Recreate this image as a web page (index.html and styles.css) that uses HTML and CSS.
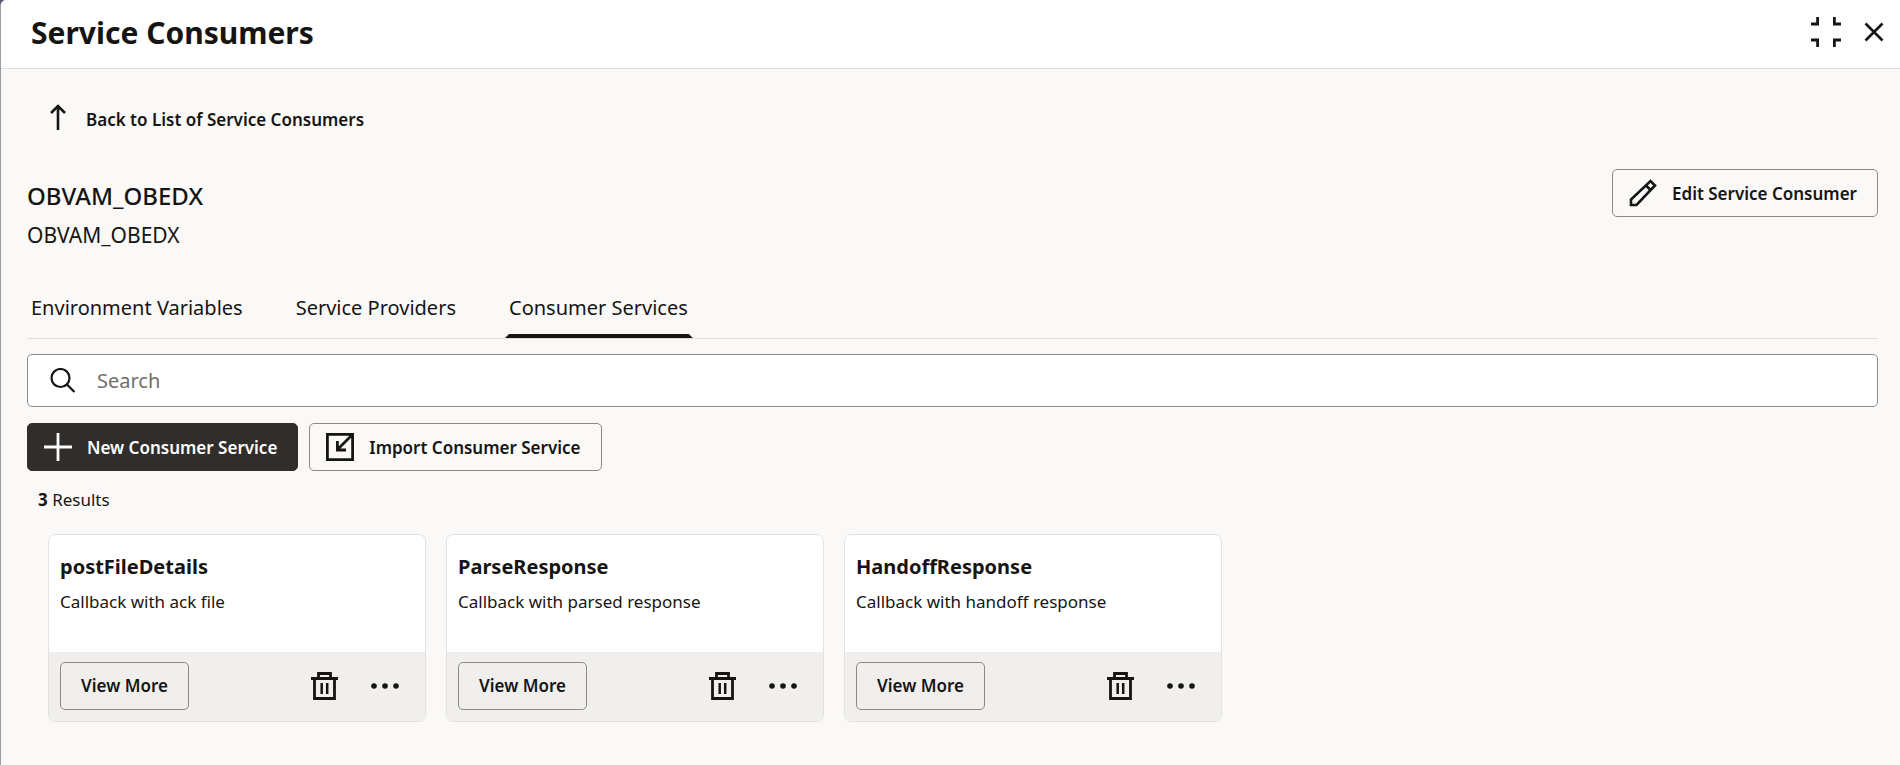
FILE: index.html
```html
<!DOCTYPE html>
<html lang="en">

<head>
    <meta charset="UTF-8">
    <meta name="viewport" content="width=device-width, initial-scale=1.0">
    <title>Service Consumers</title>

    <link rel="stylesheet" href="styles.css">
</head>

<body>
    <!-- shared icons -->
    <svg class="sprite" aria-hidden="true">
        <symbol id="icon-trash" viewBox="0 0 28 28">
            <path d="M0 6.500h27M7.500 6.500v-5h12v5M3.500 6.500v20h20v-20" fill="none" stroke="currentColor" stroke-width="2.8" />
            <path d="M10.700 11v11M16.200 11v11" fill="none" stroke="currentColor" stroke-width="2.5" />
        </symbol>
        <symbol id="icon-more" viewBox="0 0 28 28">
            <circle cx="3" cy="14" r="2.8" fill="currentColor" />
            <circle cx="14" cy="14" r="2.8" fill="currentColor" />
            <circle cx="25" cy="14" r="2.8" fill="currentColor" />
        </symbol>
    </svg>

    <div class="wrap">
        <header class="header">
            <h1 class="header-title">Service Consumers</h1>
            <div class="header-control">
                <button type="button" class="icon-btn" aria-label="Collapse">
                    <svg width="30" height="30" viewBox="0 0 30 30" fill="none" stroke="currentColor" stroke-width="2.8">
                        <path d="M0 7h6.600V0M30 7h-6.600V0M0 23h6.600V30M30 23h-6.600V30" />
                    </svg>
                </button>
                <button type="button" class="icon-btn" aria-label="Close">
                    <svg width="20" height="20" viewBox="0 0 20 20" fill="none" stroke="currentColor" stroke-width="2.6">
                        <path d="M1.500 1.500l17 17M18.500 1.500l-17 17" />
                    </svg>
                </button>
            </div>
        </header>

        <main class="main">
            <a href="#" class="back">
                <svg width="16" height="26" viewBox="0 0 16 26" fill="none" stroke="currentColor" stroke-width="2.6">
                    <path d="M8 26V2M1 9l7-7 7 7" />
                </svg>
                <span>Back to List of Service Consumers</span>
            </a>

            <div class="info">
                <div>
                    <h2 class="info-name">OBVAM_OBEDX</h2>
                    <p class="info-desc">OBVAM_OBEDX</p>
                </div>
                <button type="button" class="btn">
                    <svg width="28" height="28" viewBox="0 0 28 28" fill="none" stroke="currentColor" stroke-width="2.6">
                        <path d="M2 26v-5.500L21.500 2l4.500 4.500L7.500 26zM17 6.500l4.500 4.500" />
                    </svg>
                    <span>Edit Service Consumer</span>
                </button>
            </div>

            <nav class="tabs">
                <a href="#" class="tab">Environment Variables</a>
                <a href="#" class="tab">Service Providers</a>
                <a href="#" class="tab active" aria-current="page">Consumer Services</a>
            </nav>

            <label class="search">
                <svg width="26" height="26" viewBox="0 0 26 26" fill="none" stroke="currentColor" stroke-width="2.2">
                    <circle cx="10.500" cy="10" r="9" />
                    <path d="M17 16.500l7.500 7.500" />
                </svg>
                <input type="text" class="search-input" placeholder="Search" aria-label="Search">
            </label>

            <div class="actions">
                <button type="button" class="btn btn-dark">
                    <svg width="28" height="28" viewBox="0 0 28 28" fill="none" stroke="currentColor" stroke-width="2.8">
                        <path d="M14 0v28M0 14h28" />
                    </svg>
                    <span>New Consumer Service</span>
                </button>
                <button type="button" class="btn">
                    <svg width="28" height="28" viewBox="0 0 28 28" fill="none" stroke="currentColor" stroke-width="2.8">
                        <path d="M1.400 1.400h25.200v25.200H1.400zM26 2L12 16M11.400 8v9H20" />
                    </svg>
                    <span>Import Consumer Service</span>
                </button>
            </div>

            <p class="results"><b>3</b> Results</p>

            <div class="cards">
                <article class="card">
                    <div class="card-body">
                        <h3 class="card-title">postFileDetails</h3>
                        <p class="card-desc">Callback with ack file</p>
                    </div>
                    <div class="card-footer">
                        <button type="button" class="btn">View More</button>
                        <div class="card-control">
                            <button type="button" class="icon-btn" aria-label="Delete"><svg width="28" height="28"><use href="#icon-trash" /></svg></button>
                            <button type="button" class="icon-btn" aria-label="More actions"><svg width="28" height="28"><use href="#icon-more" /></svg></button>
                        </div>
                    </div>
                </article>
                <article class="card">
                    <div class="card-body">
                        <h3 class="card-title">ParseResponse</h3>
                        <p class="card-desc">Callback with parsed response</p>
                    </div>
                    <div class="card-footer">
                        <button type="button" class="btn">View More</button>
                        <div class="card-control">
                            <button type="button" class="icon-btn" aria-label="Delete"><svg width="28" height="28"><use href="#icon-trash" /></svg></button>
                            <button type="button" class="icon-btn" aria-label="More actions"><svg width="28" height="28"><use href="#icon-more" /></svg></button>
                        </div>
                    </div>
                </article>
                <article class="card">
                    <div class="card-body">
                        <h3 class="card-title">HandoffResponse</h3>
                        <p class="card-desc">Callback with handoff response</p>
                    </div>
                    <div class="card-footer">
                        <button type="button" class="btn">View More</button>
                        <div class="card-control">
                            <button type="button" class="icon-btn" aria-label="Delete"><svg width="28" height="28"><use href="#icon-trash" /></svg></button>
                            <button type="button" class="icon-btn" aria-label="More actions"><svg width="28" height="28"><use href="#icon-more" /></svg></button>
                        </div>
                    </div>
                </article>
            </div>
        </main>
    </div>
</body>

</html>
```

FILE: styles.css
```css
* {
    box-sizing: border-box;
}

body {
    margin: 0;
    background-color: #4f5680;
    color: #161513;
    font-family: "Noto Sans", sans-serif;
    font-size: 17px;
    line-height: 24px;
}

h1,
h2,
h3,
p {
    margin: 0;
}

a {
    color: inherit;
    text-decoration: none;
}

svg {
    display: block;
    flex-shrink: 0;
}

.sprite {
    width: 0;
    height: 0;
    position: absolute;
}

.wrap {
    min-height: 100vh;
    border-left: 1px solid #9e9e9e;
    border-top-left-radius: 6px;
    background-color: #faf9f8;
    overflow: hidden;
}

.header {
    height: 69px;
    padding: 0 16px 0 30px;
    display: flex;
    justify-content: space-between;
    background-color: #ffffff;
    border-bottom: 1px solid #dfdfde;
}

.header-title {
    padding-top: 13px;
    font-size: 30px;
    line-height: 40px;
    font-weight: 700;
}

.header-control {
    height: 64px;
    display: flex;
    align-items: center;
    gap: 23px;
}

.icon-btn {
    padding: 0;
    border: none;
    background: none;
    color: inherit;
    cursor: pointer;
}

.main {
    padding: 35px 22px 43px 26px;
}

.back {
    width: fit-content;
    padding-left: 23px;
    display: flex;
    align-items: flex-start;
    gap: 20px;
    font-weight: 600;
}

.back span {
    padding-top: 4px;
}

.info {
    margin-top: 37px;
    display: flex;
    justify-content: space-between;
    align-items: flex-start;
}

.info-name {
    padding-top: 11px;
    font-size: 24px;
    line-height: 32px;
    font-weight: 500;
}

.info-desc {
    padding-top: 9px;
    font-size: 21px;
    line-height: 28px;
}

.btn {
    height: 48px;
    padding: 0 20px 0 16px;
    display: flex;
    align-items: center;
    gap: 15px;
    border: 1px solid #8b8a88;
    border-radius: 5px;
    background: none;
    color: #161513;
    font-family: inherit;
    font-size: 17px;
    font-weight: 600;
    cursor: pointer;
}

.btn-dark {
    border-color: #312d2a;
    background-color: #312d2a;
    color: #ffffff;
}

.tabs {
    margin-top: 34px;
    display: flex;
    gap: 44px;
    border-bottom: 1px solid #dfdedc;
}

.tab {
    height: 55px;
    padding: 11px 5px 0 4px;
    font-size: 20px;
    line-height: 28px;
}

/* bar under the open tab, with slanted ends */
.active::after {
    content: "";
    display: block;
    height: 4px;
    margin: 12px -5px 0 -4px;
    background-color: #161513;
    clip-path: polygon(4px 0, calc(100% - 4px) 0, 100% 100%, 0 100%);
}

.search {
    height: 53px;
    margin-top: 15px;
    padding: 0 22px;
    display: flex;
    align-items: center;
    gap: 21px;
    border: 1px solid #8b8a88;
    border-radius: 5px;
    background-color: #ffffff;
}

.search-input {
    flex: 1;
    min-width: 0;
    padding: 0;
    border: none;
    outline: none;
    background: none;
    color: inherit;
    font-family: inherit;
    font-size: 20px;
}

.search-input::placeholder {
    color: #6f6e6c;
}

.actions {
    margin-top: 16px;
    display: flex;
    gap: 11px;
}

.results {
    margin-top: 17px;
    padding-left: 11px;
}

.cards {
    margin-top: 22px;
    padding-left: 21px;
    display: flex;
    flex-wrap: wrap;
    gap: 20px;
}

.card {
    width: 378px;
    border: 1px solid #e4e3e1;
    border-radius: 7px;
    background-color: #ffffff;
    overflow: hidden;
}

.card-body {
    height: 117px;
    padding: 18px 11px 0;
}

.card-title {
    font-size: 20px;
    line-height: 28px;
    font-weight: 700;
}

.card-desc {
    padding-top: 9px;
}

.card-footer {
    height: 69px;
    padding: 0 26px 2px 11px;
    display: flex;
    justify-content: space-between;
    align-items: center;
    background-color: #f0efed;
}

.card-footer .btn {
    padding: 0 20px;
}

.card-control {
    display: flex;
    gap: 32px;
}
```
